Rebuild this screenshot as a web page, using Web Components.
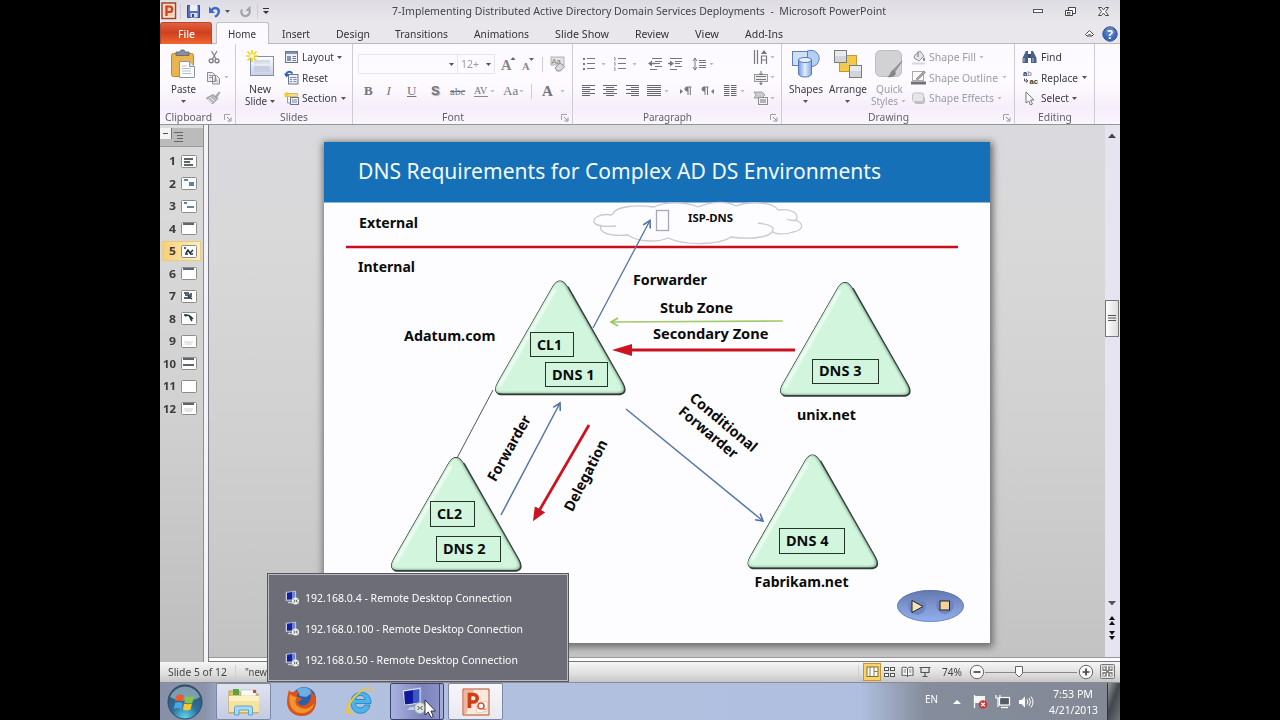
<!DOCTYPE html>
<html lang="en"><head><meta charset="utf-8"><title>PowerPoint</title>
<style>
body{margin:0;background:#000;width:1280px;height:720px;overflow:hidden;font:11px/16px "Noto Sans","Open Sans",sans-serif;color:#333}
</style></head><body><desktop-screen></desktop-screen>
<script>
const define=(n,render)=>customElements.define(n,class extends HTMLElement{
  connectedCallback(){if(!this.shadowRoot)this.attachShadow({mode:'open'}).innerHTML=render(this)}
});
/* Text squeezed or stretched to a given advance width */
customElements.define('fit-text',class extends HTMLElement{
  connectedCallback(){
    if(this.shadowRoot)return;
    const w=+this.getAttribute('w'),s=this.getAttribute('s')||11,c=this.getAttribute('c')||'inherit',b=this.getAttribute('b')||400;
    this.attachShadow({mode:'open'}).innerHTML=`<style>:host{display:block;width:${w}px;height:16px;line-height:16px;font-size:${s}px;color:${c};font-weight:${b};white-space:nowrap}
    span{display:inline-block;transform-origin:0 50%}</style><span><slot></slot></span>`;
    const sp=this.shadowRoot.querySelector('span'),n=sp.offsetWidth&&sp.getBoundingClientRect().width;
    if(n)sp.style.transform=`scaleX(${w/n})`;
  }
});
const T=(t,w,o='')=>`<fit-text w="${w}" ${o}>${t}</fit-text>`;

/* Icons: [width, height, markup] */
const L=(y,x1,x2,c='#777')=>`<path d="M${x1} ${y}H${x2}" stroke="${c}"/>`;
const sheet=(x,y,w,h,f='#fff',s='#6a7690')=>`<rect x="${x}" y="${y}" width="${w}" height="${h}" fill="${f}" stroke="${s}"/>`;
const serif='font-family="Liberation Serif" font-weight="700"';
const icons={
 arr:[7,5,`<path d="M1 1h5L3.500 4z" fill="#555"/>`],
 arrg:[7,5,`<path d="M1.500 1h4L3.500 3.500z" fill="#b8b8be"/>`],
 ppt:[16,18,`<rect x="1" y="1" width="13.500" height="15.500" fill="#fbeee8" stroke="#a8401f" stroke-width="1.500"/><rect x="2.500" y="2.500" width="10" height="12" fill="#f3cdb9"/><path d="M5.500 14V4.500h3a2.500 2.500 0 0 1 0 5.500h-3" fill="none" stroke="#c9431c" stroke-width="2.200"/>`],
 save:[14,14,`<path d="M.5 1.500h12v12h-12z" fill="#5b6fc0" stroke="#39478a"/><rect x="3" y="1" width="7.500" height="6" fill="#eef1fb"/><rect x="3.500" y="9" width="7" height="4.500" fill="#d5dbf0"/><rect x="5" y="10" width="2" height="3" fill="#36427c"/>`],
 undo:[13,13,`<path d="M3 5.500C7 1 12 3.500 10.500 8c-.5 1.700-2 3-3.500 3.800" fill="none" stroke="#3a6cc4" stroke-width="2.400"/><path d="M1 1.500v6.500h6z" fill="#3a6cc4"/>`],
 redo:[13,13,`<path d="M8.800 3.300A4.200 4.200 0 1 1 3 4.500" fill="none" stroke="#a3a3a9" stroke-width="2.200"/><path d="M11.500.5v5.500H6.500z" fill="#a3a3a9"/>`],
 qat:[10,10,`<path d="M2 2.500h6" stroke="#333"/><path d="M2 5h6L5 8z" fill="#333"/>`],
 min:[12,8,`<rect x="1.500" y="2.500" width="9" height="3" fill="#fff" stroke="#555"/>`],
 max:[13,11,`<path d="M4.500 1.500h7v6h-7z" fill="#fff" stroke="#444"/><path d="M1.500 4.500h7v5h-7z" fill="#fff" stroke="#444"/><rect x="3.500" y="6.500" width="2.500" height="1.500" fill="none" stroke="#444" stroke-width=".8"/>`],
 close:[13,11,`<path d="M1.500 1.500h3l2 2.500 2-2.500h3L8.500 5.500l3 4h-3l-2-2.500-2 2.500h-3l3-4z" fill="#fff" stroke="#444"/>`],
 up:[11,9,`<path d="M1.500 5.500l4-4 4 4-1.500 1.500H3z M4 6.500l1.500-1.500L7 6.500" fill="#fff" stroke="#444"/>`],
 help:[16,16,`<circle cx="8" cy="8" r="7.200" fill="#3d69b5" stroke="#2f5596"/><circle cx="8" cy="6" r="5" fill="#6f95d4" opacity=".55"/><text x="8" y="12.500" text-anchor="middle" font-family="Noto Sans" font-weight="700" font-size="12" fill="#fff">?</text>`],
 paste:[28,31,`<rect x="2.500" y="4.500" width="22" height="23" rx="2" fill="#ecb44e" stroke="#b8893a"/><path d="M7 3h4l1-2h3l1 2h4v3.500H7z" fill="#8b90a0" stroke="#5a5f6e" stroke-width=".8"/><path d="M10.500 12.500h10l5 5v11h-15z" fill="#fff" stroke="#8d96a8"/><path d="M20.500 12.500v5h5" fill="#dfe5ef" stroke="#8d96a8"/><path d="M13 17h5M13 19.500h9M13 22h9M13 24.500h9" stroke="#b8bfcc"/>`],
 cut:[14,14,`<path d="M4.500 1L9 9M10 1L5.500 9" stroke="#8a8a8f" stroke-width="1.400"/><circle cx="4.200" cy="10.800" r="2" fill="none" stroke="#77777c" stroke-width="1.300"/><circle cx="10" cy="10.800" r="2" fill="none" stroke="#77777c" stroke-width="1.300"/>`],
 copy:[15,14,`<path d="M1.500 1.500h5l3 3v6h-8zM6.500 4.500h4l3 3v5.500h-7z" fill="#ececee" stroke="#8b8b92"/><path d="M3 4.500h3M3 6.500h3M8 8h3M8 10h4" stroke="#999"/>`],
 brush:[15,14,`<path d="M9 5L13 0.500l1.500 1L11 7z" fill="#aaa"/><path d="M7 3.500l5 4L6.500 13 0.500 7z" fill="#b9b9bd" stroke="#8d8d92" stroke-width=".8"/><path d="M2 8l4 4M4 6l4 4" stroke="#eee"/>`],
 newslide:[30,31,`<defs><linearGradient id="n" x2="0" y2="1"><stop stop-color="#fff"/><stop offset="1" stop-color="#c8d0e4"/></linearGradient></defs><rect x="5.500" y="7.500" width="23" height="19" fill="url(#n)" stroke="#8390ad"/><rect x="9" y="11" width="16" height="3.500" fill="#d7dcea"/><rect x="9" y="17" width="16" height="6" fill="#c8cfe0"/><path d="M7 1v12M1 7h12M2.500 2.500l9 9M11.500 2.500l-9 9" stroke="#f2d61c" stroke-width="1.700"/><circle cx="7" cy="7" r="2" fill="#fffbe0"/>`],
 layout:[15,14,sheet(1.5,1.5,12,11,'#eef1f7')+`<path d="M2 3h11" stroke="#8794b2" stroke-width="2"/><rect x="3" y="6" width="4" height="5" fill="#8794b2"/>`+L(6.5,8.5,12)+L(8.5,8.5,12)+L(10.500,8.5,12)],
 reset:[15,15,sheet(4.5,4.5,9.5,9.5,'#e7ecf5')+`<path d="M6 7.500h6.500M6 9.500h2M9.500 9.500h3M6 11.500h2M9.500 11.500h3" stroke="#7f8cab"/><path d="M2 6C2 1.500 6 .5 8.500 3.500" fill="none" stroke="#2e63ae" stroke-width="1.900"/><path d="M0 3.500l2.500 4 3-3.500z" fill="#2e63ae"/>`],
 section:[16,15,sheet(6.5,6.5,8,7,'#e7ecf5')+`<path d="M8 9h5M8 11h5" stroke="#8390ad"/><path d="M1 2.500h12.500v3H1z" fill="#f6df8c" stroke="#d1ae3f" stroke-width=".8"/><path d="M3 1v5M.5 3.500h5" stroke="#f4cf18" stroke-width="1.500"/><path d="M3.500 6v6H6" fill="none" stroke="#999"/>`],
 grow:[15,17,`<text x="0" y="14" ${serif} font-size="14.500" fill="#85858a">A</text><path d="M9.500 4h5L12 1z" fill="#666"/>`],
 shrink:[12,17,`<text x="0" y="14" ${serif} font-size="10.500" fill="#85858a">A</text><path d="M7 2h5L9.500 5z" fill="#666"/>`],
 clear:[16,16,`<rect x="1" y="1" width="13" height="8" fill="#e2e2e5" stroke="#a3a3a8" stroke-width=".8"/><text x="1.500" y="8" font-family="Liberation Sans" font-size="7.500" fill="#777">Aa</text><path d="M5 12l5-5 4.500 3.500-4 4.500H7z" fill="#d9d9dc" stroke="#929298"/>`],
 list:[14,14,[2,7,12].map(y=>`<rect x="1" y="${y-1}" width="2" height="2" fill="#777"/>`+L(y-.5,5,13)).join('')],
 num:[14,14,[2,7,12].map(y=>`<path d="M1 ${y-1.5}h1v3.500" fill="none" stroke="#777" stroke-width=".8"/>`+L(y-.5,5,13)).join('')],
 outd:[15,14,L(1.5,4,14)+L(4.5,7,14)+L(6.5,7,12)+L(9.5,7,14)+L(12.5,2,9)+`<path d="M0 6.500l4-3v6z" fill="#77777c"/><path d="M4 6.500h3" stroke="#777" stroke-width="1.500"/>`],
 ind:[15,14,L(1.5,2,14)+L(4.5,7,14)+L(6.5,7,12)+L(9.5,7,14)+L(12.5,2,9)+`<path d="M6 6.500l-4-3v6z" fill="#77777c"/><path d="M0 6.500h3" stroke="#777" stroke-width="1.500"/>`],
 space:[15,14,`<path d="M3 1v12M1 4l2-3 2 3M1 10l2 3 2-3" fill="none" stroke="#777"/>`+[3.5,5.5,8.5,10.5].map(y=>L(y,7,14)).join('')],
 al:[14,14,[1.5,3.5,5.5,7.5,9.5,11.5].map((y,i)=>L(y,0,i%2?8:13,'#66666b')).join('')],
 ac:[14,14,[1.5,3.5,5.5,7.5,9.5,11.5].map((y,i)=>L(y,i%2?3:0,i%2?11:14,'#66666b')).join('')],
 ar:[14,14,[1.5,3.5,5.5,7.5,9.5,11.5].map((y,i)=>L(y,i%2?5:0,13,'#66666b')).join('')],
 aj:[14,14,[1.5,3.5,5.5,7.5,9.5,11.5].map(y=>L(y,0,14,'#66666b')).join('')],
 ltr:[12,12,`<path d="M0 4v5l3-2.500z" fill="#777"/><path d="M11.500 2H7a2 2 0 0 0 0 4h1M8 2v8M10.300 2v8" fill="none" stroke="#777"/><path d="M8 2H7a2 2 0 0 0 0 4h1z" fill="#777"/>`],
 rtl:[12,12,`<path d="M12 4v5L9 6.500z" fill="#777"/><path d="M6.500 2H2a2 2 0 0 0 0 4h1M3 2v8M5.500 2v8" fill="none" stroke="#777"/><path d="M3 2H2a2 2 0 0 0 0 4h1z" fill="#777"/>`],
 cols:[13,14,[1.5,3.5,5.5,7.5,9.5,11.5].map(y=>L(y,0,5.5,'#66666b')+L(y,7,12.5,'#66666b')).join('')],
 tdir:[16,16,`<path d="M1.500 1v14M4.500 1v14M8.500 15V7h5v8M8.500 11h5" fill="none" stroke="#77777c" stroke-width="1.200"/><path d="M8 5l3-4 3 4z" fill="#77777c"/>`],
 talign:[16,14,`<rect x="1.500" y="3.500" width="13" height="7" fill="#ececee" stroke="#999"/>`+L(5.500,3,13)+L(8.500,3,13)+`<path d="M8 0v4M8 10v4M6.500 2.500L8 4l1.500-1.500M6.500 12L8 13.500 9.500 12" fill="none" stroke="#666"/>`],
 smart:[16,15,`<path d="M1 1h8l3 3-3 3H1l2-3z" fill="#ccccd0" stroke="#909095" stroke-width=".8"/><rect x="5.500" y="6.500" width="9" height="7" fill="#f2f2f4" stroke="#8c8c91"/>`+L(9,7,13)+L(11,7,13)],
 shapes:[30,31,`<defs><linearGradient id="s" x2="1"><stop stop-color="#6f9be0"/><stop offset=".5" stop-color="#e3eefc"/><stop offset="1" stop-color="#7fa6e4"/></linearGradient></defs><circle cx="20" cy="9.500" r="8.200" fill="#b5cff3" stroke="#5b7fc0"/><rect x="1.500" y="2.500" width="15" height="14" fill="#cfdff7" stroke="#5b7fc0"/><path d="M7.500 11v14c1 4 12 4 13 0V11z" fill="url(#s)" stroke="#5579bb"/><ellipse cx="14" cy="11" rx="6.500" ry="2.500" fill="#e6effc" stroke="#5579bb"/>`],
 arrange:[30,31,`<rect x="6.500" y="6.500" width="17" height="16" fill="#f3c94b" stroke="#c49a2c"/><rect x="1.500" y="1.500" width="12" height="12" fill="#d3d5da" stroke="#777b84"/><rect x="16.500" y="16.500" width="12" height="12" fill="#d3d5da" stroke="#777b84"/><path d="M2 2h11v5H2zM17 17h11v5H17z" fill="#fff" opacity=".5"/>`],
 quick:[30,31,`<rect x="1.500" y="1.500" width="26" height="26" rx="5" fill="#d2d2d5" stroke="#bdbdc1"/><path d="M28 12L20 24l-2-1.500z" fill="#999" stroke="#8b8b90"/><path d="M19 21l3 3c-1 4-5 5-9 4 3-1 3-5 6-7z" fill="#858589"/>`],
 fill:[15,15,`<path d="M4 5l5-4 4 5-5 5-5-3z" fill="#e6e6e8" stroke="#8d8d92"/><path d="M7 7V1.500" stroke="#777"/><path d="M13 7c2 3 1 4 0 4s-2-1 0-4" fill="#888"/><path d="M1 13.500h13" stroke="#d8d8dc" stroke-width="2"/>`],
 outl:[15,15,`<rect x="1.500" y="1.500" width="11" height="9" fill="#fff" stroke="#aaa"/><path d="M5 9l8-8 1.500 1.500-8 7.500z" fill="#aaa" stroke="#777" stroke-width=".7"/><rect x="0" y="11.500" width="15" height="3" fill="#707075"/>`],
 eff:[15,15,`<rect x="3" y="5" width="11" height="8" rx="3" fill="#bdbdc2"/><rect x="1.500" y="2" width="11" height="8.500" rx="2" fill="#e6e6e9" stroke="#c2c2c6"/>`],
 find:[15,14,`<path d="M2 5l2-4h2v12H.5V8zM13 5l-2-4H9v12h5.500V8z" fill="#4b6089"/><path d="M6 4h3v4H6z" fill="#374a70"/><path d="M2 8v4M11 8v4" stroke="#b4c3df"/>`],
 repl:[16,17,`<text x="0" y="7.300" font-family="Liberation Sans" font-weight="700" font-size="7.500" fill="#333">a<tspan fill="#999">b</tspan></text><text x="6.500" y="15" font-family="Liberation Sans" font-weight="700" font-size="7.500" fill="#26402d">ac</text><path d="M1.500 9.500V12h3M3 10l2 2-2 1.500" fill="none" stroke="#555"/>`],
 sel:[12,15,`<path d="M2 1l8 8H6.500l2 4-2 1-1.700-4L2 12z" fill="#fff" stroke="#777"/>`],
 launch:[8,8,`<path d="M.5 6V.5H6" fill="none" stroke="#a2a2ac"/><path d="M3 3l3 3M7 3.500V7H3.500" fill="none" stroke="#8e8e98"/>`],
 rdp:[15,15,`<path d="M.8 2L11 .8v9.500L.8 11z" fill="#d3d9e6" stroke="#8b93a8" stroke-width=".6"/><path d="M2 2.800l5-.7v7.300l-5 .4z" fill="#151f9d"/><path d="M7 2.100l3-.3v7.300l-3 .3z" fill="#6f83d6"/><path d="M3 12.500h5" stroke="#c4cadb" stroke-width="1.500"/><circle cx="10.500" cy="11" r="3.600" fill="#e8efe4"/><path d="M8.500 9.500l1.700 1.500-1.700 1.500M12.700 9.500L11 11l1.700 1.500" fill="none" stroke="#445" stroke-width=".8"/>`],
 v1:[13,12,`<rect x="1" y="1" width="11" height="9.500" fill="#fff" stroke="#7c6a3a"/><path d="M4 1v9.500M8 5.500h4M8 1v9.500" stroke="#8a7c50"/>`],
 v2:[12,12,[1,7].map(y=>[.5,6.5].map(x=>`<rect x="${x}" y="${y+.5}" width="4" height="3" fill="#fff" stroke="#555"/>`).join('')).join('')],
 v3:[13,12,`<path d="M6.500 2.500C5 1 3 1 1 1.500v8c2-.5 4-.5 5.500 1 1.500-1.500 3.500-1.500 5.500-1v-8c-2-.5-4-.5-5.500 1zv8" fill="#fff" stroke="#555"/><path d="M2.500 4h2.500M2.500 6h2.500M8 4h2.500M8 6h2.500" stroke="#777"/>`],
 v4:[12,12,`<path d="M.5 1.500h11M2 2v4.500h8V2M6 6.500v4M3.500 10.500h5" fill="none" stroke="#555" stroke-width="1.200"/>`],
 minus:[16,16,`<circle cx="8" cy="8" r="6.700" fill="#fafafa" stroke="#666"/><path d="M4.500 8h7" stroke="#444" stroke-width="1.700"/>`],
 plus:[16,16,`<circle cx="8" cy="8" r="6.700" fill="#fafafa" stroke="#666"/><path d="M4.500 8h7M8 4.500v7" stroke="#444" stroke-width="1.700"/>`],
 thumb:[8,12,`<path d="M.5.5h7v7L4 11 .5 7.500z" fill="#fff" stroke="#666"/>`],
 fit:[16,16,`<rect x=".5" y=".5" width="14" height="14" rx="1" fill="#dedede" stroke="#777"/><rect x="2.500" y="2.500" width="10" height="10" fill="#858585"/><path d="M7.500 2v4M7.500 13V9M2 7.500h4M13 7.500H9M5 5L3.500 3.500M10 5l1.500-1.500M5 10l-1.500 1.500M10 10l1.500 1.500" stroke="#fff" stroke-width="1.200"/>`],
 start:[36,36,`<defs><radialGradient id="o" cx=".5" cy=".95" r=".9"><stop stop-color="#5fd3ee"/><stop offset=".45" stop-color="#2a6f9c"/><stop offset="1" stop-color="#33536c"/></radialGradient></defs><circle cx="18" cy="18" r="17" fill="url(#o)" stroke="#31475c"/><path d="M3 13A16 16 0 0 1 33 13C25 18 11 18 3 13z" fill="#c9dde8" opacity=".5"/><path d="M9 12c3-2 5-2 8-.5l-1 6c-3-1.500-5-1.500-8 0z" fill="#ee5a2b"/><path d="M18.500 12c3 1.500 5 1.500 8.500 0l-1.500 6.500c-3 1.500-5 1-8 0z" fill="#8cc63e"/><path d="M8 19c3-1.500 5-1.500 7.700 0l-1 6c-3-1.500-5-1.500-8 0z" fill="#4ba6e0"/><path d="M17 19.500c3 1 5 1 8 0l-1.500 6c-3 1.500-5 1-7.500 0z" fill="#fbc82c"/>`],
 explorer:[32,29,`<path d="M1 4h10l2 3h17v19H1z" fill="#e3c267" stroke="#bfa04c"/><path d="M5 2h6v6H5z" fill="#55a545"/><path d="M13 3h15v6H13z" fill="#fbfbf4" stroke="#aaa" stroke-width=".5"/><path d="M25 3h3v3h-3z" fill="#c44"/><path d="M1 9h30v16H1z" fill="#f7e39d"/><path d="M1 9h30v5H1z" fill="#fcf2c4"/><path d="M6.500 28v-7q0-2 2-2h14q2 0 2 2v7h-4v-5H11v5z" fill="#a9daf3" stroke="#58a3cf"/>`],
 firefox:[32,31,`<circle cx="18" cy="13" r="12" fill="#2c5ea9"/><path d="M11 4c4-4 13-3 15 3l-6 4-6-1z" fill="#6bb0e4"/><path d="M3 4c1 2 2 2 4 2 3-1 5-1 7 1-3 1-4 2-3 4 2 1 4 0 5 2-1 2-4 2-4 4 2 4 9 3 11-1 3-4 2-8 1-11 5 3 7 8 6 13-2 9-8 12-14 12C7 30 1 24 1 16 1 11 2 8 3 4z" fill="#d9541b"/><path d="M4 8c-2 9 1 17 9 19 8 1 14-3 15-10-3 5-8 7-13 5-6-2-7-7-4-11-3 0-5-1-7-3z" fill="#f1932f"/>`],
 ie:[32,31,`<path d="M25 19h-5.500c-2 4.500-9 3.500-9-1.500h15.500c1-15-20-15-20-1 0 14 17 14 19 2.500zM10.500 13.500c1-5.500 9-5.500 9.500 0z" fill="#4db4e8" stroke="#1d7fbd" stroke-width=".8"/><path d="M27 10c5-10-4-11-12-5C5 12-1 23 2 27c1.500 2 5 1 8-1-4 1-6 .5-6-2C4 17 14 6 22 3c5-2 7 1 5 7z" fill="#f3c52e"/>`],
 rdpbig:[36,32,`<path d="M3 4L22 1v17L5 20z" fill="#dde4f2" stroke="#8f9bc0"/><path d="M5 5.500l9-1.500v13.500L6 18.500z" fill="#101a96"/><path d="M14 4l6.500-1v13.500l-6.500 1z" fill="#3c58c8"/><path d="M11 21h6v3H8z" fill="#c5cde2"/><circle cx="21" cy="22" r="5.500" fill="#dfe6dc" stroke="#9aa"/><path d="M18.500 20l2 2-2 2M23.500 20l-2 2 2 2" fill="none" stroke="#445"/><path d="M26 14v15l3.300-3 2.700 5.500 2.300-1L32 25h4.500z" fill="#fff" stroke="#223" stroke-width=".9"/>`],
 pptbig:[30,30,`<path d="M2 2h26v26H2z" fill="#fbe9e0" stroke="#b84a26"/><path d="M3 3h10l-8 24H3z" fill="#e88b63" opacity=".55"/><path d="M8.500 21V7.500h4a3.600 3.600 0 0 1 0 7.500H9" fill="none" stroke="#cb3f17" stroke-width="3.600"/><path d="M15 16l11-2 1 10-11 2z" fill="#fff" stroke="#e0b09c" stroke-width=".6"/><circle cx="20" cy="19" r="3" fill="none" stroke="#d9552c" stroke-width="1.600"/><path d="M22.500 22.500l3-.5" stroke="#d9552c"/>`],
 flag:[15,15,`<path d="M1.500 1v13" stroke="#fff" stroke-width="1.300"/><path d="M2 2h10v7H2z" fill="#f4f4f4"/><circle cx="10" cy="10.500" r="4.300" fill="#cf3737"/><path d="M8.200 8.700l3.600 3.600M11.800 8.700l-3.600 3.600" stroke="#fff" stroke-width="1.300"/>`],
 net:[16,15,`<rect x="4.500" y="3.500" width="10" height="7.500" fill="#555d68" stroke="#fff" stroke-width="1.200"/><path d="M6 13.500h7" stroke="#fff" stroke-width="1.300"/><path d="M1 1v3h4V1M3 4v9" fill="none" stroke="#fff" stroke-width="1.200"/>`],
 vol:[16,14,`<path d="M1 5h2.500L7 1.500v11L3.500 9H1z" fill="#fff"/><path d="M9 4.500q1.700 2.500 0 5M11 3q3 4 0 8M13 1.500q4 5.500 0 11" fill="none" stroke="#fff"/>`]
};
define('ui-icon',e=>{const[w,h,m]=icons[e.getAttribute('name')];return `<style>:host{display:block;width:${w}px;height:${h}px}svg{display:block;overflow:visible}</style><svg width="${w}" height="${h}" viewBox="0 0 ${w} ${h}">${m}</svg>`});
const I=n=>`<ui-icon name="${n}"></ui-icon>`;

/* A flex row: each item is [start, markup, width]; the gap before it comes from the previous item's end */
const row=(x,items,h=20.5)=>`<div style="display:flex;align-items:center;height:${h}px">`+items.map(([s,m,w])=>{
  if(w==null){const k=/ui-icon name="(\w+)"/.exec(m),t=/ w="([\d.]+)"/.exec(m);w=m.startsWith('<fit')?+t[1]:icons[k[1]][0]}
  const o=`<div style="flex:none;margin-left:${(s-x).toFixed(2)}px;width:${w}px">${m}</div>`;x=s+w;return o}).join('')+'</div>';
const sep=`<div style="height:15px;width:1px;background:#cfccd4"></div>`;
const G=(g,st='')=>`<div style="font:700 13px/16px 'Liberation Serif',serif;color:#74747a;white-space:nowrap;${st}">${g}</div>`;
const big=(icon,t,w,t2,w2,c='#3a3a44')=>`<div style="display:flex;flex-direction:column;align-items:center;color:${c}">${I(icon)}<div style="height:1px"></div>${T(t,w)}${t2?`<div style="display:flex;align-items:center;gap:2px;margin-top:-4px">${T(t2,w2)}${I(c=='#3a3a44'?'arr':'arrg')}</div>`:`<div style="margin-top:2px">${I('arr')}</div>`}</div>`;

define('title-bar',()=>`<style>:host{display:flex;height:22px;box-sizing:border-box;background:linear-gradient(#dedce3,#eae8ed)}</style>`+
 row(160,[[161,I('ppt')],[180,sep,1],[187,I('save')],[208,I('undo')],[224,I('arr')],[239,I('redo')],[257,sep,1],[261,I('qat')],[392,T('7-Implementing Distributed Active Directory Domain Services Deployments &nbsp;- &nbsp;Microsoft PowerPoint',494,'c="#44444c"')],[1032,I('min')],[1064,I('max')],[1097,I('close')]],22));
define('ribbon-tabs',()=>`<style>:host{display:flex;height:22px;box-sizing:border-box;background:#e9e7ec;border-bottom:1px solid #b9b7c0}
 .f,.h{height:22px;flex:none;display:flex;align-items:center;box-sizing:border-box}
 .f{width:52px;padding-left:17px;border-radius:3px 3px 0 0;background:linear-gradient(#e3613f,#cf3f20 45%,#f0672f);border:1px solid #b44a33;border-bottom:0}
 .h{width:53px;margin-left:4px;padding-left:11px;height:22px;background:#fcfaff;border:1px solid #c2bfc9;border-bottom:0;border-radius:3px 3px 0 0}</style>
 <div class="f">${T('File',17,'c="#fff" b="500"')}</div><div class="h">${T('Home',28)}</div>`+
 row(269,[[282,T('Insert',28)],[336,T('Design',34)],[395,T('Transitions',53)],[474,T('Animations',55)],[555,T('Slide Show',54)],[635,T('Review',34)],[695,T('View',24)],[745,T('Add-Ins',38)],[1084,I('up')],[1101.500,I('help')]],23));
define('ribbon-group',e=>{const w=e.getAttribute('w'),t=e.getAttribute('label'),tw=e.getAttribute('tw'),ll=e.getAttribute('launch');
 return `<style>:host{display:flex;flex-direction:column;flex:none;width:${w}px;box-sizing:border-box;border-right:1px solid #cfcbd6;padding-top:3px;position:relative}
 .c{height:62px;flex:none}.l{height:16px;flex:none;display:flex;align-items:center;justify-content:center;color:#62626c;padding-right:${ll?19:0}px}.k{position:absolute;right:3px;bottom:0;height:10px}</style><div class="c"><slot></slot></div>${t?`<div class="l">${T(t,tw)}</div>`:''}${ll?`<div class="k">${I('launch')}</div>`:''}`});
const dim='c="#9b9ba3"';
define('ribbon-bar',()=>`<style>:host{display:flex;height:81px;box-sizing:border-box;background:linear-gradient(#fcfaff,#fdfbff 50%,#f6eefa 80%,#faf6fc);border-bottom:1px solid #96949c;color:#3a3a44}
 .r{display:flex}.combo{box-sizing:border-box;height:20px;border:1px solid #eee2ef}</style>
 <ribbon-group w="76" label="Clipboard" tw="47" launch="1"><div class="r"><div style="width:46px;margin-top:2px">${big('paste','Paste',25)}</div><div>`+
 row(206,[[206.500,I('cut')]])+row(206,[[206,I('copy')],[223,I('arrg')]])+row(206,[[206,I('brush')]])+`</div></div></ribbon-group>
 <ribbon-group w="117" label="Slides" tw="28"><div class="r"><div style="width:48px;margin-top:2px">${big('newslide','New',22,'Slide',22)}</div><div>`+
 row(284,[[284,I('layout')],[301.500,T('Layout',32)],[336,I('arr')]])+row(284,[[284,I('reset')],[302,T('Reset',26)]])+row(284,[[284,I('section')],[302,T('Section',35)],[340,I('arr')]])+`</div></div></ribbon-group>
 <ribbon-group w="220" label="Font" tw="22" launch="1"><div style="height:7px"></div>`+
 row(353,[[358,`<div class="combo" style="display:flex;align-items:center;justify-content:flex-end;padding-right:2px">${I('arr')}</div>`,100],[457,`<div class="combo" style="display:flex;align-items:center;justify-content:space-between;padding:0 2px 0 3px">${T('12+',18,dim)}${I('arr')}</div>`,38],[500.500,I('grow')],[522,I('shrink')],[542,sep,1],[550,I('clear')]])+
 row(353,[[364,G('B'),12],[386.500,G('<i>I</i>','font-weight:400'),10],[407,G('<u>U</u>','font-weight:400'),12],[431,G('S','font-family:Liberation Sans;text-shadow:1px 1px 1px #aaa'),11],[450,G('<s>abc</s>','font-size:11px;font-weight:400'),17],[474,G('AV','font-size:10px;font-weight:400;line-height:11px;border-bottom:1px solid #888;height:11px'),14],[489,I('arrg')],[503,G('Aa','font-weight:400'),14],[518,I('arrg')],[531,sep,1],[542,G('A','font-size:15px'),12],[559,I('arrg')]],33)+`</ribbon-group>
 <ribbon-group w="209" label="Paragraph" tw="49" launch="1"><div class="r"><div style="margin-top:7px">`+
 row(573,[[582,I('list')],[599.500,I('arrg')],[613,I('num')],[630.500,I('arrg')],[648,I('outd')],[668,I('ind')],[692,I('space')],[707.500,I('arrg')]])+
 row(573,[[582,I('al')],[603,I('ac')],[626,I('ar')],[647,I('aj')],[663,I('arrg')],[680,I('ltr')],[701.500,I('rtl')],[724,I('cols')],[739,I('arrg')]],33)+`</div><div>`+
 ['tdir','talign','smart'].map((n,i)=>row(746,[[752.500,I(n)],[768.500,I('arrg')]])).join('')+`</div></div></ribbon-group>
 <ribbon-group w="233" label="Drawing" tw="41" launch="1"><div class="r"><div style="width:47px;margin-top:2px">${big('shapes','Shapes',34)}</div><div style="width:37px;margin-top:2px">${big('arrange','Arrange',38)}</div><div style="width:44px;margin:2px 0 0 1px">${big('quick','Quick',27,'Styles',27,'#9b9ba3')}</div><div>`+
 row(911,[[911,I('fill')],[929,T('Shape Fill',47,dim)],[978,I('arrg')]])+row(911,[[911,I('outl')],[929,T('Shape Outline',69,dim)],[1001,I('arrg')]])+row(911,[[911,I('eff')],[929,T('Shape Effects',65,dim)],[996,I('arrg')]])+`</div></div></ribbon-group>
 <ribbon-group w="80" label="Editing" tw="34">`+
 row(1015,[[1022,I('find')],[1041,T('Find',21)]])+row(1015,[[1022.500,I('repl')],[1041,T('Replace',37)],[1081,I('arr')]])+row(1015,[[1024,I('sel')],[1041,T('Select',28)],[1071,I('arr')]])+`</ribbon-group>`);

const marks=['M3 4h9M3 7h6M3 10h9','M3 3h4M8 6h5M8 8h5','M3 3h3M6 7h7','M2 2h11','M3 3h2M5 8l2-3 2 3 3-3M4 9h3M9 9h3','M2 2h11','M3 3h5M4 5h5M3 8h7M7 6l4 3M10 3v4','M4 4q4-2 5 1t2 4M3 3h3M9 4l3 3','','M2 2h11M2 8h11','','M2 2h11'];
define('outline-pane',()=>`<style>:host{display:block;width:44px;flex:none;background:linear-gradient(#dcdcdc,#d2d2d2 50%,#bdbdbd);box-sizing:border-box;border-right:1px solid #8c8c92}
 .t{display:flex;height:18px;margin-top:3px;background:#bbb;border-bottom:1px solid #999}.t i{width:11px;background:linear-gradient(#555,#555) 3px 5px/5px 1px no-repeat #f4f4f4;height:11px;border-right:1px solid #777}.t svg{margin:2px 0 0 1px}
 .r{display:flex;align-items:center;justify-content:flex-end;height:18px;margin:0 3px 4.500px;padding-right:3px;box-sizing:border-box;gap:5px}
 .on{background:linear-gradient(90deg,#f7cf78,#fff0bd);box-shadow:0 0 0 1px #e8cb7f}</style><div class="t"><i></i><svg width="12" height="14"><path d="M1 2.500h9M4 5.500h6M4 8.500h6M1 11.500h9" stroke="#666"/></svg></div><div style="height:5px"></div>`+
 marks.map((m,i)=>`<div class="r${i==4?' on':''}">${T(i+1,i>8?13:7,'b="700" s="11" c="#3c3c3c"')}<svg width="16" height="13"><rect x=".5" y=".5" width="15" height="12" rx="1" fill="#fff" stroke="#8d8d8d"/><path d="${m}" fill="none" stroke="${[1,2].includes(i)?'#235f8e':'#24343c'}" stroke-width="1.500"/>${i==8||i==11?'<path d="M3 7h9M4 9h7" stroke="#ccc"/>':''}</svg></div>`).join(''));

/* Slide drawing, in window coordinates */
const tx=(s,x,y,w,z=14.5,ex='')=>`<text x="${x}" y="${y}" textLength="${w}" lengthAdjust="spacingAndGlyphs" font-size="${z}" font-weight="700" fill="#0b0b0b" ${ex}>${s}</text>`;
const rt=(s,x,y,w,a)=>`<g transform="translate(${x} ${y}) rotate(${a})">${tx(s,0,0,w)}</g>`;
const P='M-7 5Q0-5 7 5L64 103Q70 114 59 114H-59Q-70 114-64 103Z';
const tri=(x,y)=>`<g transform="translate(${x} ${y}) scale(.975 .99)"><path d="${P}" fill="#a3c9b0" stroke="#1d2420" stroke-width="1.100"/><path d="M8 6L64.500 104Q70 114.500 59 114.500H-59Q-64 114.500-65 111" fill="none" stroke="#2f3a33" stroke-width="2"/><g clip-path="url(#tc)"><path d="${P}" transform="translate(-1 -.5)" fill="#d2f5de" stroke="#8eb69b" stroke-width="2" filter="url(#bl)"/><path d="M-5 8L-62 106" stroke="#f4fff7" stroke-width="3" filter="url(#bl)"/><path d="M0 6L57 106Q58 108 55 109H-56Q-60 109-57 104Z" fill="#d2f5de" filter="url(#bl)"/></g></g>`;
const box=(s,x,y,w,h,tX,tY,tw)=>`<rect x="${x+.5}" y="${y+.5}" width="${w}" height="${h}" fill="none" stroke="#24322a"/>`+tx(s,tX,tY,tw);
const ln=(x1,y1,x2,y2,c,w,m)=>`<path d="M${x1} ${y1}L${x2} ${y2}" stroke="${c}" stroke-width="${w}" fill="none" ${m?`marker-end="url(#${m})"`:''}/>`;
const open=(id,c)=>`<marker id="${id}" markerUnits="userSpaceOnUse" markerWidth="12" markerHeight="12" refX="9" refY="5" orient="auto"><path d="M2 1L9 5L2 9" fill="none" stroke="${c}" stroke-width="1.600"/></marker>`;
const solid=(id,l,h)=>`<marker id="${id}" markerUnits="userSpaceOnUse" markerWidth="24" markerHeight="16" refX="2" refY="${h}" orient="auto"><path d="M0 0L${l} ${h}L0 ${2*h}z" fill="#cb1420"/></marker>`;
define('slide-canvas',()=>`<style>:host{display:block;width:666px;height:501px;flex:none;background:#fdfdff;box-shadow:1px 2px 7px 2px #6d6d6d}svg{display:block;font-family:"Noto Sans",sans-serif}</style>
<svg width="666" height="501" viewBox="324 142 666 501"><defs>${open('ab','#4f71a5')}${open('ag','#98c557')}${solid('ah',20,6)}${solid('ai',14,6)}<filter id="bl" x="-20%" y="-20%" width="140%" height="140%"><feGaussianBlur stdDeviation="1"/></filter><clipPath id="tc"><path d="${P}"/></clipPath><linearGradient id="ov" x2="0" y2="1"><stop stop-color="#6377ac"/><stop offset=".5" stop-color="#7f96d0"/><stop offset="1" stop-color="#8fb0ee"/></linearGradient></defs>
<rect x="324" y="142" width="666" height="60.500" fill="#1570b8"/>
${tx('DNS Requirements for Complex AD DS Environments',358,179,523,21.5,'style="font-weight:400;fill:#f4faff"')}
${tx('External',359,228,59)}${tx('Internal',358,272,57)}
<g fill="none" stroke="#c9c7cf" stroke-width="1.300"><path d="M612 215c4-10 26-10 42-8 10-5 30-6 44 0 14-6 30-6 38-1 16-6 38-3 42 4 14-2 22 4 18 10 8 4 8 10-3 12-8 3-18 2-20 0M797 220c-4 1-8 0-10-1M612 215c-12-2-19 3-18 7 1 4 12 5 22 4M602 225c-5 5 3 12 26 10 12 9 34 6 40 3 18 8 52 7 63-1 22 3 44 0 42-9-2-3-8-4-15-5"/><rect x="656.500" y="210.500" width="12" height="20" stroke="#aaa8b4"/></g>
${tx('ISP-DNS',688,222,45,11)}
${ln(346,247,958,247,'#c90f1e',2.4)}
${ln(593,328,650,220.500,'#5375a9',1.300,'ab')}
${ln(493,390,457,458,'#555',1)}
${tri(560,281)}${tri(456,457.5)}${tri(845,282.5)}${tri(812.5,455)}
${box('CL1',530,332,43,24,537,350,25)}${box('DNS 1',545,362,62,24,552,380,42.5)}
${box('CL2',430,501,44,25,437,519,25)}${box('DNS 2',436,536,64,25,443,554,42.5)}
${box('DNS 3',812,359,66,24,819,376,42.5)}${box('DNS 4',779,528,65,25,786,546,42.5)}
${tx('Adatum.com',404,341,91.5)}${tx('Forwarder',633,284.500,74)}${tx('Stub Zone',660,312.500,73)}${tx('Secondary Zone',653,339,115.5)}
${tx('unix.net',797,420,59)}${tx('Fabrikam.net',754.500,587,94)}
${ln(783,321,611,322,'#a3ca6b',1.600,'ag')}
${ln(795,350,630,350,'#c9121f',3,'ah')}
${ln(501,515,560,403,'#5375a9',1.500,'ab')}${ln(626,409,763,521,'#5375a9',1.500,'ab')}
${ln(589,425,539,511,'#cb1420',2.800,'ai')}
${rt('Forwarder',495.5,482.5,73,-60.5)}${rt('Delegation',572.5,512.5,78,-63)}${rt('Conditional',688.5,399.5,83,40)}${rt('Forwarder',677.5,413,72,40)}
<ellipse cx="930.500" cy="606" rx="33.500" ry="16" fill="url(#ov)"/><ellipse cx="930.500" cy="606" rx="33" ry="15.500" fill="none" stroke="#5669a0" stroke-opacity=".5"/>
<circle cx="917" cy="606" r="9" fill="#6e86c2"/><circle cx="945" cy="605" r="9" fill="#6e86c2"/><path d="M912 600.500v12l11-6z" fill="#f5e3b8" stroke="#222"/><rect x="940" y="601" width="9.500" height="9" fill="#f3d39c" stroke="#222"/></svg>`);
define('scroll-bar',()=>`<style>:host{display:flex;flex-direction:column;align-items:center;width:14px;flex:none;background:#e6e4f0;height:532px;margin-right:1px}
 .th{flex:none;width:12px;height:35px;border:1px solid #777;background:linear-gradient(90deg,#fff,#ddd);display:flex;align-items:center;justify-content:center;margin:158px 0 262px}svg{display:block;flex:none}</style>
 <svg width="10" height="17"><path d="M1 13h8L5 8.500z" fill="#444"/></svg><div class="th"><svg width="8" height="8"><path d="M0 .5h8M0 3h8M0 5.500h8" stroke="#555"/></svg></div>
 <svg width="10" height="58"><path d="M1 2h8L5 6.500z" fill="#555"/><path d="M2 21h6L5 17zM2 26h6L5 22zM2 32h6l-3 4zM2 37h6l-3 4z" fill="#111"/></svg>`);
define('work-space',()=>`<style>:host{display:flex;height:537px;background:#d9d9dc}
 .d{width:4px;background:#f4f3f8;border-right:1px solid #7b7b86}.m{flex:1;display:flex;flex-direction:column}.u{display:flex;height:532px;background:#e6e4f0}.s{flex:1;min-width:0;background:linear-gradient(#dadade,#d8d8d8 25%,#d0d0d0 60%,#c3c3c3);padding:17px 0 0 115px;box-sizing:border-box}.b{height:3px;background:#fbfbfd;border-top:1px solid #999;border-bottom:1px solid #777}</style>
 <outline-pane></outline-pane><div class="d"></div><div class="m"><div class="u"><div class="s"><slide-canvas></slide-canvas></div><scroll-bar></scroll-bar></div><div class="b"></div></div>`);
define('status-bar',()=>`<style>:host{display:flex;height:21px;background:linear-gradient(#f6f6f6,#dedede 60%,#c6c6c8);border-bottom:1px solid #8c8c92;box-sizing:border-box;color:#444}.a{box-sizing:border-box;height:18px;border:1px solid #c9962e;background:#fbd568;display:flex;align-items:center;justify-content:center}.k{height:1px;background:#888}</style>`+
 row(160,[[167.500,T('Slide 5 of 12',59)],[235,sep,1],[244.500,T('"new',22)],[858,sep,1],[863,`<div class="a">${I('v1')}</div>`,18],[884,I('v2')],[901,I('v3')],[919,I('v4')],[942,T('74%',20)],[969,I('minus')],[985,'<div class="k"></div>',31],[1015,I('thumb')],[1023,'<div class="k"></div>',54],[1077.500,I('plus')],[1100,I('fit')]],20));
define('task-bar',()=>`<style>:host{display:flex;height:37px;background:linear-gradient(90deg,#8690a8,#8993aa 45px,#b2c1df 75px,#b0bfdf 700px,#858d9c 765px,#838995 930px);color:#fff}
 .b{height:37px;box-sizing:border-box;border:1px solid #7d88a6;border-radius:2px;display:flex;align-items:center;justify-content:center;background:linear-gradient(#e1e4f0,#c3cce2)}
 .r{background:linear-gradient(90deg,#aab3df,#7b83bd 60%,#8e95c6);border-color:#3c426b;box-shadow:inset -4px 0 0 -1px #a3abd4,inset -5px 0 0 -1px #3f4678}.p{background:linear-gradient(#f8f6fa,#e8e9f2)}.e{height:37px;background:linear-gradient(110deg,#999,#42474d 45%,#6d737a);border-left:1px solid #333}</style>`+
 row(160,[[167,I('start')],[216,`<div class="b">${I('explorer')}</div>`,55],[286,I('firefox')],[345,I('ie')],[390,`<div class="b r">${I('rdpbig')}</div>`,54],[448,`<div class="b p">${I('pptbig')}</div>`,55],[924.500,`<div style="padding-bottom:5px">${T('EN',13)}</div>`,13],[953,'<svg width="9" height="6" style="display:block"><path d="M0 5h8L4 1z" fill="#fff"/></svg>',9],[973,I('flag')],[995,I('net')],[1018,I('vol')],[1048,`<div style="display:flex;flex-direction:column;align-items:center">${T('7:53 PM',40)}${T('4/21/2013',49)}</div>`,50],[1107,'<div class="e"></div>',13]],37));
define('window-list',()=>`<style>:host{display:flex;flex-direction:column;box-sizing:border-box;width:302px;height:109px;padding:8px 16px 0 17px;background:#6c6d76;border:1px solid #55565f;box-shadow:inset 0 0 0 1px #b7b8c0;color:#fff}.r{flex:none;display:flex;align-items:center;gap:4.500px;height:31px}</style>`+
 [['192.168.0.4',207],['192.168.0.100',218],['192.168.0.50',213]].map(([a,w])=>`<div class="r">${I('rdp')}${T(a+' - Remote Desktop Connection',w)}</div>`).join(''));
define('desktop-screen',()=>`<style>:host{display:block;position:relative;width:960px;height:720px;margin:0 auto;overflow:hidden}window-list{position:absolute;left:107px;top:573px}</style>
 <title-bar></title-bar><ribbon-tabs></ribbon-tabs><ribbon-bar></ribbon-bar><work-space></work-space><status-bar></status-bar><task-bar></task-bar><window-list></window-list>`);
</script></body></html>
